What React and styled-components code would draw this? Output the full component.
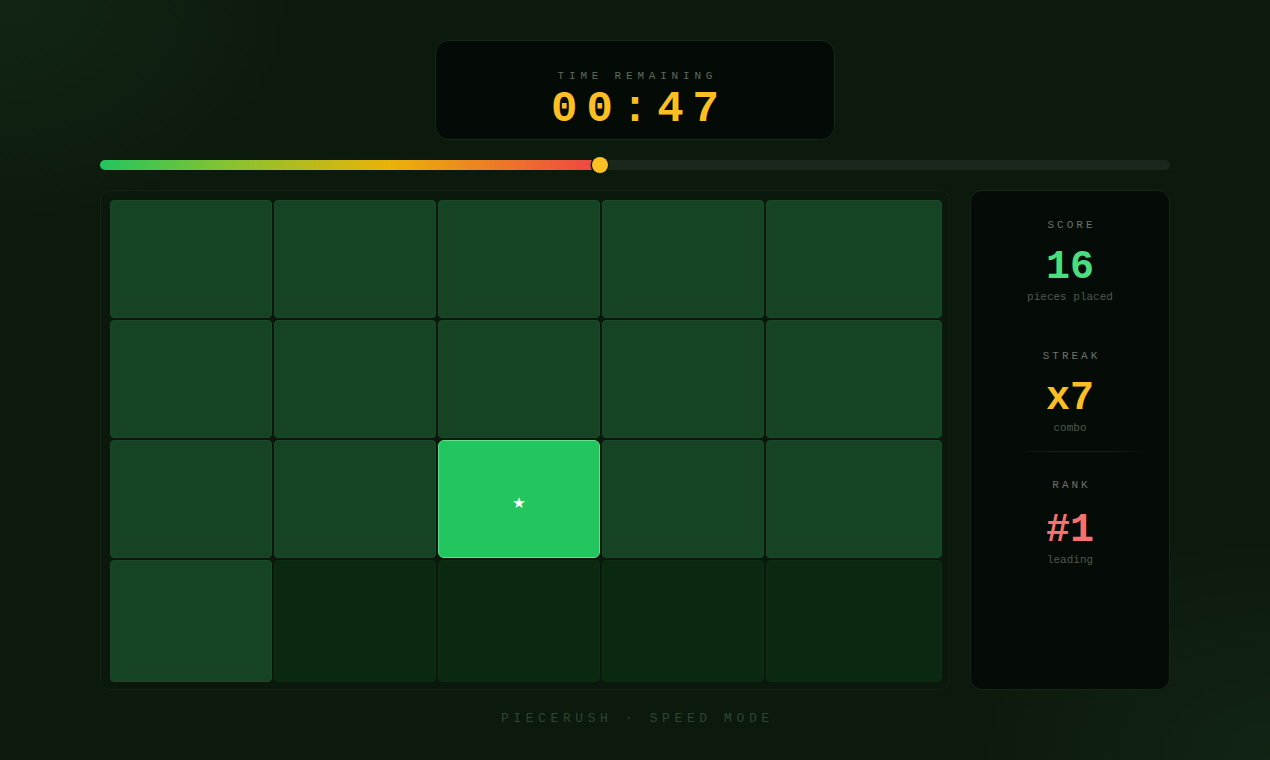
import React from "react";
import styled, { createGlobalStyle } from "styled-components";

const Global = createGlobalStyle`
  html, body { margin: 0; padding: 0; }
  body {
    width: 1270px;
    height: 760px;
    overflow: hidden;
    background:
      radial-gradient(ellipse 420px 320px at 0% 0%, rgba(30, 60, 30, 0.35), transparent 70%),
      radial-gradient(ellipse 420px 320px at 100% 100%, rgba(30, 60, 36, 0.3), transparent 70%),
      #0c1a0e;
    font-family: "Liberation Mono", "DejaVu Sans Mono", monospace;
  }
`;

const Page = styled.div`
  display: flex;
  flex-direction: column;
  align-items: center;
  padding-top: 40px;
  height: 760px;
  box-sizing: border-box;
`;

const TimerCard = styled.div`
  width: 400px;
  height: 100px;
  box-sizing: border-box;
  background: #040a05;
  border: 1px solid #16271a;
  border-radius: 14px;
  display: flex;
  flex-direction: column;
  align-items: center;
  justify-content: center;
  padding-top: 20px;
`;

const TimerLabel = styled.div`
  font-size: 11px;
  line-height: 14px;
  letter-spacing: 4.8px;
  color: #5d6b5e;
  margin-right: -4.8px;
`;

const TimerValue = styled.div`
  font-size: 44px;
  line-height: 46px;
  font-weight: 700;
  letter-spacing: 9px;
  color: #fbbf24;
  margin-top: 3px;
  margin-right: -9px;
`;

const Track = styled.div`
  position: relative;
  width: 1070px;
  height: 10px;
  margin-top: 20px;
  border-radius: 5px;
  background: #1a271c;
`;

const Fill = styled.div`
  height: 100%;
  border-radius: 5px;
  background: linear-gradient(90deg, #22c55e 0%, #84c332 25%, #eab308 58%, #ef4444 100%);
`;

const Thumb = styled.div`
  position: absolute;
  top: 50%;
  width: 16px;
  height: 16px;
  border-radius: 50%;
  background: #fbbf24;
  box-shadow: 0 0 0 1.5px #0c1a0e;
  transform: translate(-50%, -50%);
`;

const Main = styled.div`
  display: flex;
  gap: 20px;
  margin-top: 20px;
  height: 500px;
`;

const Board = styled.div`
  width: 850px;
  height: 500px;
  box-sizing: border-box;
  padding: 9px 7px 7px 9px;
  background: #0b190d;
  border: 1px solid #122214;
  border-radius: 10px;
  display: grid;
  grid-template-columns: 162px 162px 162px 162px 176px;
  grid-template-rows: 118px 118px 118px 122px;
  gap: 2px;
`;

const Cell = styled.div`
  box-sizing: border-box;
  border-radius: ${(p) => (p.$state === "active" ? "6px" : "4px")};
  display: flex;
  align-items: center;
  justify-content: center;
  padding-top: ${(p) => (p.$state === "active" ? "7px" : "0")};
  color: #ffffff;
  font-family: "DejaVu Sans", sans-serif;
  font-size: 15px;
  background: ${(p) =>
    p.$state === "active" ? "#22c55e" : p.$state === "filled" ? "#164324" : "#0b2811"};
  border: ${(p) =>
    p.$state === "active"
      ? "1.5px solid #5ee08c"
      : p.$state === "filled"
      ? "1px solid #1b4a2a"
      : "1px solid #0d2c13"};
`;

const Panel = styled.div`
  width: 200px;
  height: 500px;
  box-sizing: border-box;
  background: #050b06;
  border: 1px solid #172619;
  border-radius: 12px;
  display: flex;
  flex-direction: column;
  align-items: center;
`;

const Stat = styled.div`
  width: 100%;
  display: flex;
  flex-direction: column;
  align-items: center;
  padding: 27px 0 18px;
  position: relative;
  ${(p) =>
    p.$divider
      ? `
    margin-top: -2px;
    &::before {
      content: "";
      position: absolute;
      top: 0;
      left: 40px;
      right: 18px;
      height: 1px;
      background: linear-gradient(90deg, transparent, #15221a 30%, #15221a 70%, transparent);
    }
  `
      : ""}
`;

const StatLabel = styled.div`
  font-size: 11px;
  line-height: 14px;
  letter-spacing: 3px;
  color: #6a736b;
  margin-right: -3px;
`;

const StatValue = styled.div`
  font-size: 40px;
  line-height: 44px;
  font-weight: 700;
  margin-top: ${(p) => (p.$tall ? "17px" : "14px")};
  color: ${(p) => p.$color};
`;

const StatSub = styled.div`
  font-size: 11px;
  line-height: 14px;
  color: #4d5a4e;
  margin-top: 0;
`;

const Footer = styled.div`
  margin-top: 21px;
  font-size: 13px;
  line-height: 16px;
  letter-spacing: 4.6px;
  color: #2d4631;
  margin-right: -4.6px;
`;

const cells = [
  "filled", "filled", "filled", "filled", "filled",
  "filled", "filled", "filled", "filled", "filled",
  "filled", "filled", "active", "filled", "filled",
  "filled", "empty", "empty", "empty", "empty",
];

export default function App() {
  const progress = 500 / 1070;
  return (
    <>
      <Global />
      <Page>
        <TimerCard>
          <TimerLabel>TIME REMAINING</TimerLabel>
          <TimerValue>00:47</TimerValue>
        </TimerCard>
        <Track>
          <Fill style={{ width: `${progress * 100}%` }} />
          <Thumb style={{ left: `${progress * 100}%` }} />
        </Track>
        <Main>
          <Board>
            {cells.map((s, i) => (
              <Cell key={i} $state={s}>
                {s === "active" ? "★" : null}
              </Cell>
            ))}
          </Board>
          <Panel>
            <Stat>
              <StatLabel>SCORE</StatLabel>
              <StatValue $color="#4ade80">16</StatValue>
              <StatSub>pieces placed</StatSub>
            </Stat>
            <Stat>
              <StatLabel>STREAK</StatLabel>
              <StatValue $color="#fbbf24">x7</StatValue>
              <StatSub>combo</StatSub>
            </Stat>
            <Stat $divider>
              <StatLabel>RANK</StatLabel>
              <StatValue $color="#f87171" $tall>#1</StatValue>
              <StatSub>leading</StatSub>
            </Stat>
          </Panel>
        </Main>
        <Footer>PIECERUSH · SPEED MODE</Footer>
      </Page>
    </>
  );
}
